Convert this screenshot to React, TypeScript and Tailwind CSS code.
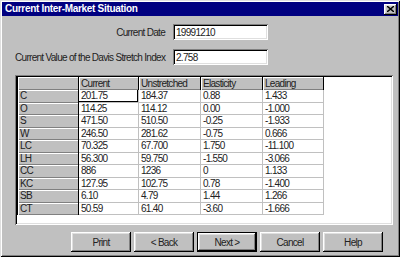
import React from "react";

const rows: [string, string, string, string, string][] = [
  ["C", "201.75", "184.37", "0.88", "1.433"],
  ["O", "114.25", "114.12", "0.00", "-1.000"],
  ["S", "471.50", "510.50", "-0.25", "-1.933"],
  ["W", "246.50", "281.62", "-0.75", "0.666"],
  ["LC", "70.325", "67.700", "1.750", "-11.100"],
  ["LH", "56.300", "59.750", "-1.550", "-3.066"],
  ["CC", "886", "1236", "0", "1.133"],
  ["KC", "127.95", "102.75", "0.78", "-1.400"],
  ["SB", "6.10", "4.79", "1.44", "1.266"],
  ["CT", "50.59", "61.40", "-3.60", "-1.666"],
];

const headers = ["", "Current", "Unstretched", "Elasticity", "Leading"];

const raised =
  "shadow-[inset_-1px_-1px_0_#000,inset_1px_1px_0_#fff,inset_-2px_-2px_0_#808080,inset_2px_2px_0_#dfdfdf]";
const sunken =
  "shadow-[inset_1px_1px_0_#808080,inset_-1px_-1px_0_#fff,inset_2px_2px_0_#000,inset_-2px_-2px_0_#dfdfdf]";

function Button({ label, isDefault }: { label: string; isDefault?: boolean }) {
  return (
    <div className={`h-[20px] w-[60px] ${isDefault ? "border border-black" : ""}`}>
      <div
        className={`flex h-full w-full items-center justify-center bg-[#c0c0c0] text-[#222] ${raised}`}
      >
        {label}
      </div>
    </div>
  );
}

export default function App() {
  return (
    <div
      className="h-[257px] w-[400px] bg-[#c0c0c0] p-[2px] text-[10px] tracking-[-0.7px] shadow-[inset_1px_1px_0_#dfdfdf,inset_-1px_-1px_0_#000,inset_2px_2px_0_#fff,inset_-2px_-2px_0_#808080]"
      style={{ fontFamily: '"Liberation Sans", Arial, sans-serif' }}
    >
      <div className="flex h-[14px] items-center justify-between bg-[#000080] pl-[3px] pr-[1px]">
        <span className="font-bold leading-none tracking-[-0.3px] text-white">Current Inter-Market Situation</span>
        <div className={`flex h-[11px] w-[13px] items-center justify-center bg-[#c0c0c0] ${raised}`}>
          <svg width="7" height="6" viewBox="0 0 7 6">
            <path d="M0 0 L7 6 M7 0 L0 6" stroke="#000" strokeWidth="1.4" />
          </svg>
        </div>
      </div>

      <div className="flex flex-col pl-[13px] text-[#222]">
        <div className="mt-[8px] flex items-center">
          <span className="w-[150px] text-right">Current Date</span>
          <div className={`ml-[8px] flex h-[16px] w-[95px] items-center bg-white pl-[3px] ${sunken}`}>19991210</div>
        </div>
        <div className="mt-[9px] flex items-center">
          <span className="w-[150px] whitespace-nowrap">Current Value of the Davis Stretch Index</span>
          <div className={`ml-[8px] flex h-[16px] w-[95px] items-center bg-white pl-[3px] ${sunken}`}>2.758</div>
        </div>

        <div className={`mt-[10px] h-[150px] w-[378px] bg-white p-[2px] ${sunken}`}>
          <div className="grid grid-cols-[62px_60px_62px_62px_61px]">
            {headers.map((h, i) => (
              <div
                key={i}
                className={`h-[13px] truncate border-r border-r-[#000] bg-[#c0c0c0] pl-[2px] leading-[13px] shadow-[inset_1px_1px_0_#fff,inset_0_-1px_0_#808080] ${i === 0 ? "border-l border-l-black" : ""}`}
              >
                {h}
              </div>
            ))}
            {rows.map((r, ri) =>
              r.map((c, ci) =>
                ci === 0 ? (
                  <div
                    key={`${ri}-${ci}`}
                    className="h-[12.5px] border-l border-r border-l-black border-r-black bg-[#c0c0c0] pl-[2px] leading-[12px] shadow-[inset_1px_1px_0_#fff,inset_0_-1px_0_#808080]"
                  >
                    {c}
                  </div>
                ) : (
                  <div
                    key={`${ri}-${ci}`}
                    className={`h-[12.5px] border-b border-r border-[#c0c0c0] border-r-dotted pl-[2px] leading-[12px] ${ri === 0 && ci === 1 ? "shadow-[inset_-1px_-1px_0_#000]" : ""}`}
                  >
                    {c}
                  </div>
                ),
              ),
            )}
          </div>
        </div>

        <div className="mt-[7px] flex gap-[3px] pl-[56px]">
          <Button label="Print" />
          <Button label="< Back" />
          <Button label="Next >" isDefault />
          <Button label="Cancel" />
          <Button label="Help" />
        </div>
      </div>
    </div>
  );
}
